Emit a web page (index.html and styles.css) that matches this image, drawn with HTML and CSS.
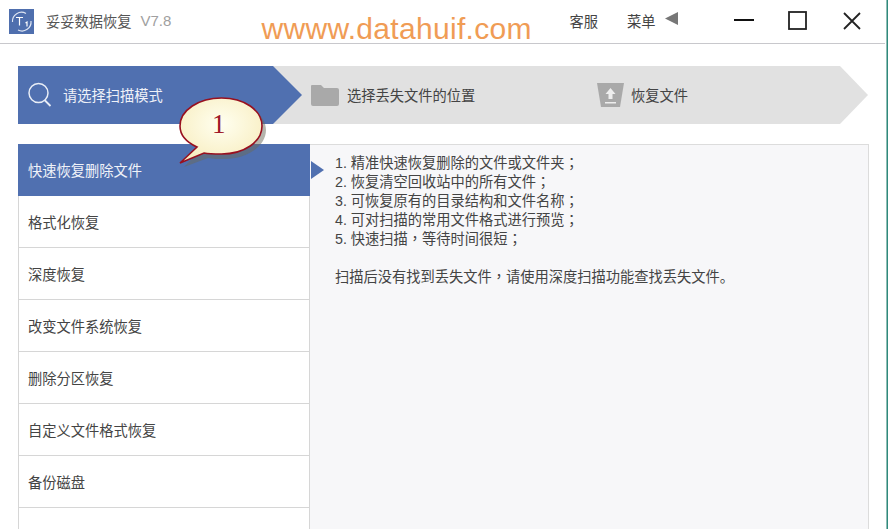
FILE: index.html
```html
<!DOCTYPE html>
<html lang="zh-CN">
<head>
<meta charset="utf-8">
<title>妥妥数据恢复</title>
<link rel="stylesheet" href="styles.css">
</head>
<body>
<div class="app">
  <header class="titlebar">
    <svg class="logo" width="25" height="25" viewBox="0 0 25 25">
      <rect width="25" height="25" fill="#4f6fae"/>
      <path d="M3.500 13A9 9 0 0 1 17 4.500" fill="none" stroke="#dfe6f3" stroke-width="1.200"/>
      <path d="M22 12A9 9 0 0 1 9 21" fill="none" stroke="#dfe6f3" stroke-width="1.200"/>
      <path d="M7 8.500h7M10.500 8.500v8M16.500 14l1.500-1v4.500" fill="none" stroke="#fff" stroke-width="1.200"/>
    </svg>
    <span class="app-name">妥妥数据恢复</span>
    <span class="version">V7.8</span>
    <span class="watermark">wwww.datahuif.com</span>
    <span class="service">客服</span>
    <span class="menu">菜单</span>
    <svg class="menu-arrow" width="14" height="14" viewBox="0 0 14 14"><path d="M0 6.500 13 0v13z" fill="#777"/></svg>
    <svg class="win win-min" width="20" height="20" viewBox="0 0 20 20"><path d="M0 10h20" stroke="#111" stroke-width="2"/></svg>
    <svg class="win win-max" width="19" height="19" viewBox="0 0 19 19"><rect x="1" y="1" width="17" height="17" fill="none" stroke="#222" stroke-width="1.800"/></svg>
    <svg class="win win-close" width="18" height="18" viewBox="0 0 18 18"><path d="M1 1l16 16M17 1 1 17" stroke="#222" stroke-width="1.800"/></svg>
  </header>

  <nav class="steps">
    <div class="step step-active">
      <svg class="step-search" width="24" height="26" viewBox="0 0 24 26"><circle cx="10.500" cy="11" r="9.500" fill="none" stroke="#e8edf6" stroke-width="1.500"/><path d="M16.500 18l6 6" stroke="#e8edf6" stroke-width="1.800"/></svg>
      <span>请选择扫描模式</span>
    </div>
    <div class="step step-location">
      <svg width="28" height="21" viewBox="0 0 28 21"><path d="M1 0h9l3 3h13a2 2 0 0 1 2 2v14a2 2 0 0 1-2 2H2a2 2 0 0 1-2-2V1a1 1 0 0 1 1-1z" fill="#a9a9a9"/></svg>
      <span>选择丢失文件的位置</span>
    </div>
    <div class="step step-restore">
      <svg width="27" height="24" viewBox="0 0 27 24"><path d="M0 0h27l-4 24H4z" fill="#a9a9a9"/><path d="M13.500 5l5 6h-3v5h-4v-5h-3z M8 19h11v1.500H8z" fill="#eee"/></svg>
      <span>恢复文件</span>
    </div>
  </nav>

  <main class="content">
    <ul class="modes">
      <li class="mode mode-active">快速恢复删除文件</li>
      <li class="mode">格式化恢复</li>
      <li class="mode">深度恢复</li>
      <li class="mode">改变文件系统恢复</li>
      <li class="mode">删除分区恢复</li>
      <li class="mode">自定义文件格式恢复</li>
      <li class="mode">备份磁盘</li>
      <li class="mode"></li>
    </ul>
    <section class="details">
      <p>1. 精准快速恢复删除的文件或文件夹<span class="punct" lang="zh-TW">；</span></p>
      <p>2. 恢复清空回收站中的所有文件<span class="punct" lang="zh-TW">；</span></p>
      <p>3. 可恢复原有的目录结构和文件名称<span class="punct" lang="zh-TW">；</span></p>
      <p>4. 可对扫描的常用文件格式进行预览<span class="punct" lang="zh-TW">；</span></p>
      <p>5. 快速扫描<span class="punct" lang="zh-TW">，</span>等待时间很短<span class="punct" lang="zh-TW">；</span></p>
      <p class="note">扫描后没有找到丢失文件<span class="punct" lang="zh-TW">，</span>请使用深度扫描功能查找丢失文件。</p>
    </section>
  </main>

  <div class="callout">
    <svg width="100" height="80" viewBox="0 0 100 80">
      <defs>
        <radialGradient id="cream" cx="50%" cy="40%" r="60%"><stop offset="0" stop-color="#fffff0"/><stop offset="1" stop-color="#f8eec2"/></radialGradient>
      </defs>
      <path d="M42.500 3C20 3 1.500 15 1.500 30c0 9 6 16 17 21L2 68l24-9c5 1 11 1 16.500 1C65 60 84 47 84 31S65 3 42.500 3z" fill="#6a6a5a" opacity=".5" transform="translate(3 3)"/>
      <path d="M42.500 2C20 2 1 14 1 30c0 9 6 16 17 21L1 67l24-10c5 1 11 1 17.500 1C65 58 83 46 83 30S65 2 42.500 2z" fill="url(#cream)" stroke="#98101f" stroke-width="1.600"/>
    </svg>
    <span class="callout-num">1</span>
  </div>
  <div class="edge"></div>
</div>
</body>
</html>
```
FILE: styles.css
```css
* { box-sizing: border-box; }
html, body { margin: 0; padding: 0; }
body {
  width: 888px;
  height: 529px;
  overflow: hidden;
  background: #fff;
  font-family: "Liberation Sans", "Noto Sans CJK SC", sans-serif;
  font-size: 14.25px;
  color: #444;
}
.app { position: relative; width: 888px; height: 529px; overflow: hidden; }

.titlebar {
  display: flex;
  align-items: center;
  width: 885px;
  height: 44px;
  padding: 0 0 0 9px;
  border-bottom: 1px solid #c8c8cc;
  white-space: nowrap;
}
.logo { flex: none; margin-top: -1px; }
.app-name { margin-left: 12px; margin-top: -3px; color: #555; }
.version { margin-left: 9px; margin-top: -3px; color: #a0a0a0; font-size: 15px; width: 31px; }
.watermark {
  margin-left: 90px;
  margin-top: 14px;
  width: 269px;
  font-size: 30px;
  letter-spacing: 0.3px;
  color: #f09c55;
  line-height: 30px;
}
.service { margin-left: 39px; margin-top: -3px; }
.menu { margin-left: 29px; margin-top: -3px; }
.menu-arrow { margin-left: 9px; margin-top: -5px; flex: none; }
.win { flex: none; margin-top: -2px; }
.win-min { margin-left: 55px; margin-top: -4px; }
.win-max { margin-left: 34px; }
.win-close { margin-left: 36px; }

.steps {
  display: flex;
  margin: 22px 0 0 18px;
  width: 850px;
  height: 58px;
  background: #e1e1e1;
  clip-path: polygon(0 0, 822px 0, 850px 29px, 822px 58px, 0 58px);
}
.step { display: flex; align-items: center; height: 58px; white-space: nowrap; }
.step span { margin-top: -2px; }
.step-active {
  flex: none;
  width: 284px;
  padding-left: 10px;
  background: #5070b0;
  color: #eef1f8;
  clip-path: polygon(0 0, 255px 0, 284px 29px, 255px 58px, 0 58px);
}
.step-active span { margin-left: 11px; }
.step-location { width: 295px; padding-left: 9px; }
.step-location span { margin-left: 8px; }
.step-restore { padding-left: 0; }
.step-restore span { margin-left: 7px; }

.content { display: flex; margin: 20px 0 0 18px; width: 851px; height: 385px; }
.modes {
  flex: none;
  width: 292px;
  margin: 0;
  padding: 0;
  list-style: none;
  background: #fff;
}
.mode {
  height: 52px;
  display: flex;
  align-items: center;
  padding: 0 0 0 9px;
  border-left: 1px solid #d6d6d6;
  border-right: 1px solid #d6d6d6;
  border-bottom: 1px solid #d6d6d6;
  color: #444;
}
.mode-active {
  position: relative;
  background: #5070b0;
  color: #f0f3f9;
  border-color: #5070b0;
}
.mode-active::after {
  content: "";
  position: absolute;
  left: 292px;
  top: 17px;
  border-left: 13px solid #5070b0;
  border-top: 9px solid transparent;
  border-bottom: 9px solid transparent;
}
.details {
  flex: 1;
  padding: 9px 0 0 25px;
  background: #f7f7f9;
  border-top: 1px solid #dcdcdc;
  border-right: 1px solid #dcdcdc;
  line-height: 19px;
  color: #444;
}
.details p { margin: 0; height: 19px; }
.details .note { margin-top: 19px; }
.punct { font-family: "Noto Sans CJK TC", sans-serif; line-height: 1; }

.callout { position: absolute; left: 179px; top: 96px; width: 100px; height: 80px; }
.callout svg { display: block; }
.callout-num {
  position: absolute;
  left: 33px;
  top: 12px;
  font-family: "Liberation Serif", serif;
  font-size: 27px;
  line-height: 32px;
  color: #a01828;
}
.edge { position: absolute; right: 0; top: 0; width: 2px; height: 529px; background: #2f8a7c; border-left: 1px solid #8fbdb5; }
```
